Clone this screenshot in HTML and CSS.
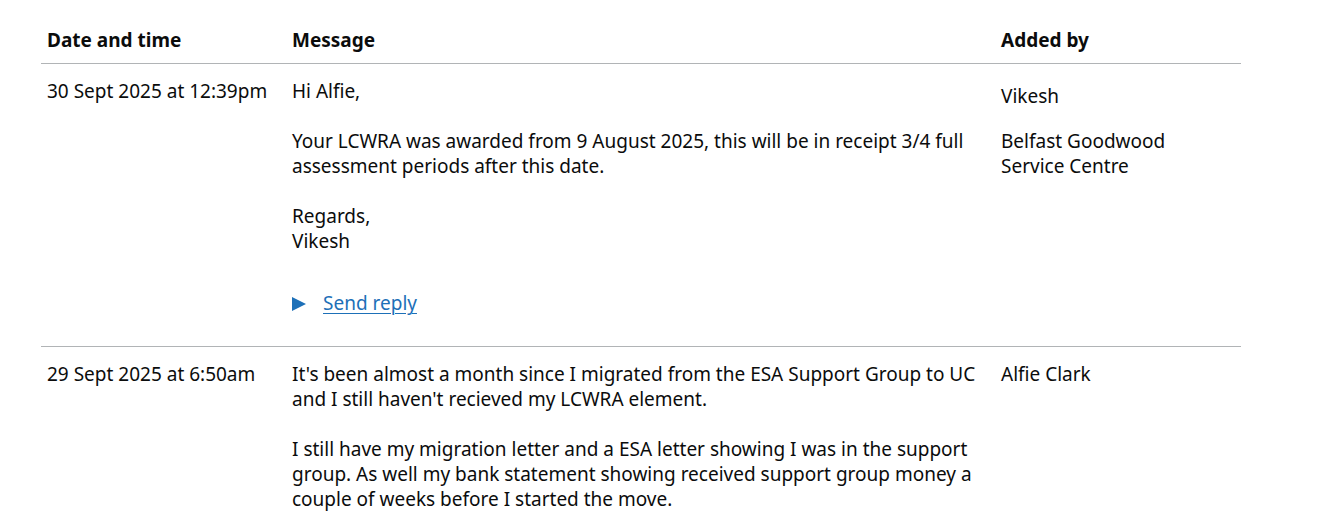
FILE: index.html
```html
<!DOCTYPE html>
<html lang="en">
<head>
<meta charset="utf-8">
<title>Messages</title>
<link rel="stylesheet" href="styles.css">
</head>
<body>
<main class="page">
  <table class="table">
    <colgroup>
      <col class="col-date">
      <col class="col-message">
      <col class="col-added">
    </colgroup>
    <thead>
      <tr>
        <th class="cell head">Date and time</th>
        <th class="cell head">Message</th>
        <th class="cell head">Added by</th>
      </tr>
    </thead>
    <tbody>
      <tr class="row">
        <td class="cell">30 Sept 2025 at 12:39pm</td>
        <td class="cell">
          <p class="para">Hi Alfie,</p>
          <p class="para">Your LCWRA was awarded from 9 August 2025, this will be in receipt 3/4 full<br>assessment periods after this date.</p>
          <p class="para">Regards,<br>Vikesh</p>
          <details class="details">
            <summary class="summary"><span class="summary-text">Send reply</span></summary>
          </details>
        </td>
        <td class="cell">
          <p class="para para-offset">Vikesh</p>
          <p class="para">Belfast Goodwood<br>Service Centre</p>
        </td>
      </tr>
      <tr class="row">
        <td class="cell">29 Sept 2025 at 6:50am</td>
        <td class="cell">
          <p class="para">It's been almost a month since I migrated from the ESA Support Group to UC<br>and I still haven't recieved my LCWRA element.</p>
          <p class="para">I still have my migration letter and a ESA letter showing I was in the support<br>group. As well my bank statement showing received support group money a<br>couple of weeks before I started the move.</p>
        </td>
        <td class="cell">
          <p class="para">Alfie Clark</p>
        </td>
      </tr>
    </tbody>
  </table>
</main>
</body>
</html>
```
FILE: styles.css
```css
html, body {
  margin: 0;
  padding: 0;
  background: #ffffff;
}

body {
  font-family: "Noto Sans", "Liberation Sans", Arial, sans-serif;
  font-size: 19px;
  line-height: 25px;
  color: #0b0c0c;
}

.page {
  padding: 18px 88px 0 41px;
}

.table {
  width: 1200px;
  border-collapse: collapse;
  border-spacing: 0;
  table-layout: fixed;
}

.col-date { width: 245px; }
.col-message { width: 709px; }
.col-added { width: 246px; }

.cell {
  text-align: left;
  vertical-align: top;
  padding: 15px 6px 10px 6px;
  border-bottom: 1px solid #b1b4b6;
  white-space: nowrap;
}

.head {
  font-weight: 700;
  padding: 10px 6px 10px 6px;
}

.para {
  margin: 0 0 25px 0;
}

.para:last-child {
  margin-bottom: 0;
}

.para-offset {
  margin-top: 5px;
  margin-bottom: 20px;
}

.details {
  margin: 37px 0 20px 0;
}

.summary {
  display: flex;
  align-items: center;
  gap: 17px;
  list-style: none;
  color: #1d70b8;
  cursor: pointer;
}

.summary::-webkit-details-marker {
  display: none;
}

.summary::before {
  content: "";
  display: block;
  width: 0;
  height: 0;
  border-style: solid;
  border-width: 7px 0 7px 14px;
  border-color: transparent transparent transparent #1d70b8;
}

.summary-text {
  text-decoration: underline;
  text-decoration-thickness: 1px;
  text-underline-offset: 3px;
}
```
